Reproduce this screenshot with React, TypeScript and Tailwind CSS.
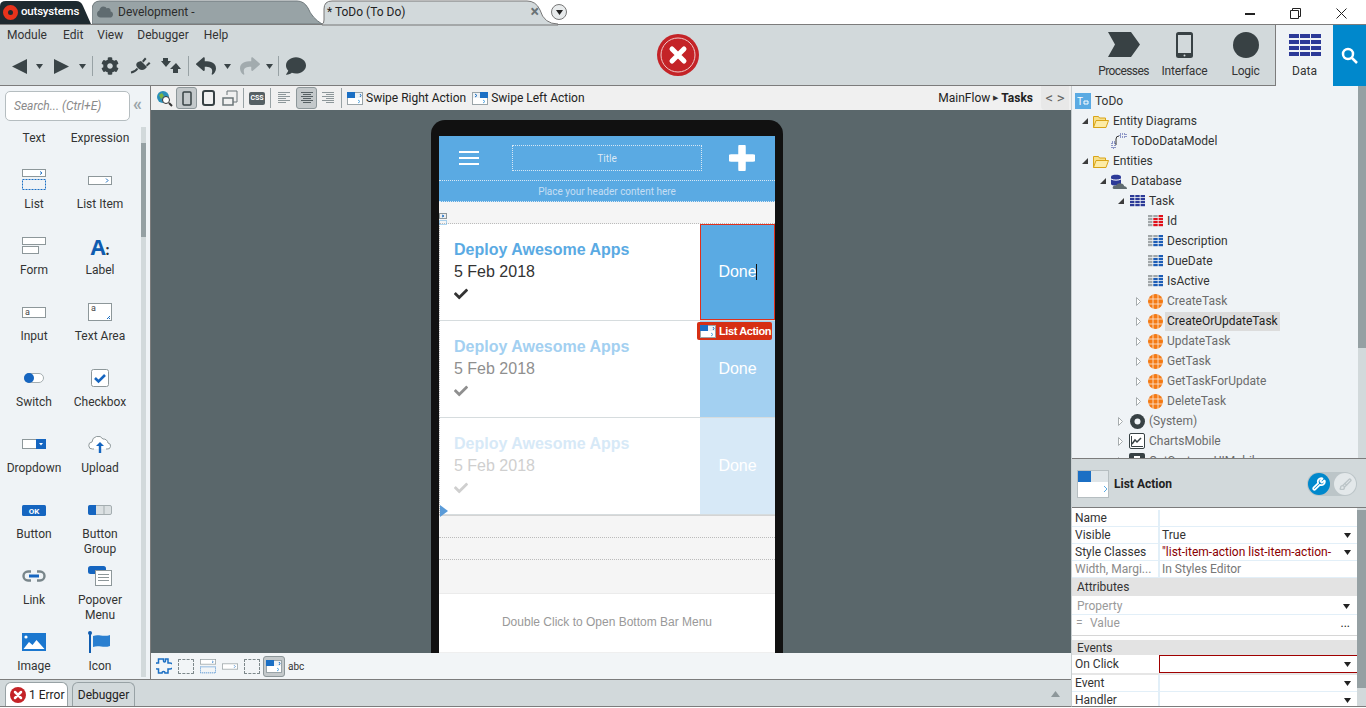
import * as React from "react";
import { Brush, Wrench } from "lucide-react";
import { FaCheck, FaCloud, FaCog, FaComment, FaReply, FaShare } from "react-icons/fa";

const Caret = ({ className = "" }: { className?: string }) => (
  <svg width="7" height="5" viewBox="0 0 7 5" className={className}>
    <path d="M0 0h7L3.5 5z" fill="currentColor" />
  </svg>
);

const Sep = ({ className = "" }: { className?: string }) => (
  <div className={`h-[20px] w-px bg-[#98a2a5] ${className}`} />
);

function SwipeIcon({ flip = false }: { flip?: boolean }) {
  return (
    <svg width="16" height="13" viewBox="0 0 16 13" className="shrink-0">
      <rect x="0.5" y="0.5" width="15" height="12" fill="#fff" stroke="#9aa4a8" />
      <rect x="1" y="1" width="14" height="5" fill="#eef2f5" />
      <rect x={flip ? 8 : 0} y="0" width="8" height="6" fill="#1b6fc4" />
      <path d={flip ? "M3 2l2 1.5L3 5" : "M13 2l1 1.5L13 5"} stroke="#1b6fc4" fill="none" />
      <path d="M11 8l2 1.5L11 11" stroke="#5aaae3" fill="none" />
    </svg>
  );
}

const ListBox = () => (
  <svg width="24" height="22" viewBox="0 0 24 22">
    <rect x="0.5" y="0.5" width="23" height="7" fill="#fff" stroke="#8d979a" />
    <path d="M18 2.5l2 1.5-2 1.5" stroke="#1b6fc4" fill="none" />
    <rect x="0.5" y="10.5" width="23" height="10" fill="none" stroke="#1b6fc4" strokeDasharray="2 1" />
  </svg>
);

const ItemBox = () => (
  <svg width="24" height="9" viewBox="0 0 24 9">
    <rect x="0.5" y="0.5" width="23" height="8" fill="#fff" stroke="#8d979a" />
    <path d="M18 2.5l2 2-2 2" stroke="#1b6fc4" fill="none" />
  </svg>
);

const widgets: { label: string; icon: React.ReactNode; two?: string }[] = [
  { label: "List", icon: <ListBox /> },
  { label: "List Item", icon: <ItemBox /> },
  {
    label: "Form",
    icon: (
      <svg width="24" height="18" viewBox="0 0 24 18" fill="#fff" stroke="#8d979a">
        <rect x="0.5" y="0.5" width="23" height="7" />
        <rect x="0.5" y="9.5" width="16" height="7" />
      </svg>
    ),
  },
  {
    label: "Label",
    icon: <span className="font-['Open_Sans',sans-serif] text-[22px] font-bold leading-none text-[#0f5cb0]">A<span className="text-[14px] text-[#333]">:</span></span>,
  },
  {
    label: "Input",
    icon: (
      <svg width="24" height="11" viewBox="0 0 24 11">
        <rect x="0.5" y="0.5" width="23" height="10" fill="#fff" stroke="#8d979a" />
        <text x="3" y="8" fontSize="9" fill="#444">a</text>
      </svg>
    ),
  },
  {
    label: "Text Area",
    icon: (
      <svg width="24" height="18" viewBox="0 0 24 18">
        <rect x="0.5" y="0.5" width="23" height="17" fill="#fff" stroke="#8d979a" />
        <text x="3" y="8" fontSize="9" fill="#444">a</text>
        <path d="M19 16l3-3M21 16l1-1" stroke="#1b6fc4" />
      </svg>
    ),
  },
  {
    label: "Switch",
    icon: (
      <svg width="20" height="10" viewBox="0 0 20 10">
        <rect x="0.5" y="0.5" width="19" height="9" rx="4.5" fill="#fff" stroke="#a4adb0" />
        <circle cx="5" cy="5" r="5" fill="#1565c0" />
      </svg>
    ),
  },
  {
    label: "Checkbox",
    icon: (
      <svg width="18" height="18" viewBox="0 0 18 18">
        <rect x="0.5" y="0.5" width="17" height="17" rx="2" fill="#fff" stroke="#8d979a" />
        <path d="M4 9l3.5 3.5L14 6" stroke="#1565c0" strokeWidth="2.6" fill="none" />
      </svg>
    ),
  },
  {
    label: "Dropdown",
    icon: (
      <svg width="24" height="10" viewBox="0 0 24 10">
        <rect x="0.5" y="0.5" width="23" height="9" fill="#fff" stroke="#8d979a" />
        <rect x="14" y="0" width="10" height="10" fill="#1565c0" />
        <path d="M17 4h4l-2 2.5z" fill="#fff" />
      </svg>
    ),
  },
  {
    label: "Upload",
    icon: (
      <svg width="24" height="18" viewBox="0 0 24 18">
        <path d="M6 14H4.5a3.5 3.5 0 0 1-.5-7 6 6 0 0 1 11-3 4.5 4.5 0 0 1 5 4 3 3 0 0 1-1 6h-1" fill="#fff" stroke="#8d979a" />
        <path d="M12 7l-4 4h2.8v7h2.4v-7H16z" fill="#1565c0" />
      </svg>
    ),
  },
  {
    label: "Button",
    icon: (
      <svg width="24" height="11" viewBox="0 0 24 11">
        <rect width="24" height="11" rx="1.5" fill="#1565c0" />
        <text x="12" y="8.5" fontSize="8" fontWeight="700" textAnchor="middle" fill="#fff">OK</text>
      </svg>
    ),
  },
  {
    label: "Button",
    two: "Group",
    icon: (
      <svg width="24" height="10" viewBox="0 0 24 10">
        <rect x="0.5" y="0.5" width="23" height="9" rx="1.5" fill="#dbe0e2" stroke="#a4adb0" />
        <path d="M8 0H2a2 2 0 0 0-2 2v6a2 2 0 0 0 2 2h6z" fill="#1565c0" />
        <path d="M16 0v10" stroke="#a4adb0" />
      </svg>
    ),
  },
  {
    label: "Link",
    icon: (
      <svg width="24" height="12" viewBox="0 0 24 12" fill="none" strokeWidth="2.4">
        <path d="M9 1.5H6a4.5 4.5 0 0 0 0 9h3M15 1.5h3a4.5 4.5 0 0 1 0 9h-3" stroke="#78858a" />
        <path d="M7 6h10" stroke="#1565c0" strokeWidth="3" />
      </svg>
    ),
  },
  {
    label: "Popover",
    two: "Menu",
    icon: (
      <svg width="24" height="20" viewBox="0 0 24 20">
        <rect x="0" y="0" width="18" height="8" rx="2.5" fill="#1565c0" />
        <rect x="7.5" y="4.5" width="16" height="15" fill="#fff" stroke="#8d979a" />
        <path d="M10 8.5h11M10 11.5h11M10 14.5h11" stroke="#8d979a" />
      </svg>
    ),
  },
  {
    label: "Image",
    icon: (
      <svg width="24" height="18" viewBox="0 0 24 18">
        <rect width="24" height="18" fill="#1b77cf" />
        <circle cx="4" cy="4" r="1.6" fill="#fff" />
        <path d="M1.5 16l5.5-7 3.5 3 4-5 8 9z" fill="#fff" />
      </svg>
    ),
  },
  {
    label: "Icon",
    icon: (
      <svg width="24" height="22" viewBox="0 0 24 22">
        <circle cx="2" cy="2" r="2" fill="#0f5cb0" />
        <path d="M1 2h2v20H1z" fill="#0f5cb0" />
        <path d="M5 5c6-2.500 9 1.500 17-1v11c-7 2.500-11-1.500-17 1z" fill="#2a7fd0" />
      </svg>
    ),
  },
];

function TaskGrid({ cell = "#2c3a98" }: { cell?: string }) {
  return (
    <svg width="15" height="12" viewBox="0 0 15 12" fill={cell}>
      {[0, 3, 6, 9].map((y) => [0, 5.3, 10.6].map((x) => <rect key={`${x}-${y}`} x={x} y={y} width="4.4" height="2.2" />))}
    </svg>
  );
}

function AttrIcon({ pk = false }: { pk?: boolean }) {
  const tone = pk ? "#e0101a" : "#1c5cb5";
  return (
    <svg width="15" height="12" viewBox="0 0 15 12">
      {[0, 3, 6, 9].map((y) => (
        <React.Fragment key={y}>
          <rect x="0" y={y} width="4.4" height="2.2" fill="#a0a6a8" />
          <rect x="5.3" y={y} width="4.4" height="2.2" fill={y === 0 ? "#a0a6a8" : tone} />
          <rect x="10.6" y={y} width="4.4" height="2.2" fill={tone} />
        </React.Fragment>
      ))}
    </svg>
  );
}

const ActionIcon = () => (
  <svg width="15" height="15" viewBox="0 0 15 15">
    <circle cx="7.5" cy="7.5" r="7.5" fill="#f47a14" />
    <path d="M0 5h15M0 10h15M5 0v15M10 0v15" stroke="#fff" strokeWidth="0.8" opacity="0.85" />
  </svg>
);

const FolderIcon = () => (
  <svg width="16" height="13" viewBox="0 0 16 13">
    <path d="M.5 12.500V1.500h5l1 1.500h6v2" fill="#f7e08a" stroke="#d9a418" />
    <path d="M.5 12.500l2.500-7h12.500l-2.500 7z" fill="#fdeca6" stroke="#d9a418" />
  </svg>
);

type TreeRow = {
  label: string;
  pad: string;
  arrow?: "open" | "closed";
  icon: React.ReactNode;
  tone?: string;
  selected?: boolean;
};

const treeRows: TreeRow[] = [
  {
    label: "ToDo",
    pad: "pl-[3px]",
    icon: (
      <svg width="16" height="16" viewBox="0 0 16 16">
        <rect width="16" height="16" fill="#5aaae3" />
        <text x="2" y="12" fontSize="10" fill="#fff">T</text>
        <path d="M9 8h4v3H9z" stroke="#fff" fill="none" />
      </svg>
    ),
  },
  { label: "Entity Diagrams", pad: "pl-[10px]", arrow: "open", icon: <FolderIcon /> },
  {
    label: "ToDoDataModel",
    pad: "pl-[39px]",
    icon: (
      <svg width="16" height="16" viewBox="0 0 16 16" fill="none">
        <path d="M1 9h3v6H1zM9 1h6v3H9z" stroke="#2c3a98" strokeDasharray="1 1" />
        <path d="M5 12V6q0-3 3-3" stroke="#333" />
      </svg>
    ),
  },
  { label: "Entities", pad: "pl-[10px]", arrow: "open", icon: <FolderIcon /> },
  {
    label: "Database",
    pad: "pl-[28px]",
    arrow: "open",
    icon: (
      <svg width="16" height="15" viewBox="0 0 16 15">
        <path d="M0 2.500C0 0 10 0 10 2.500V10C10 12 0 12 0 10z" fill="#2c3a98" />
        <path d="M0 5c2 1.500 8 1.500 10 0" stroke="#fff" fill="none" />
        <path d="M3 15q-2-.5-1-2.500 1-1.500 3-1 2-3 5-2 3 .5 3 2.500 3 .5 3 3z" fill="#5f6b70" />
      </svg>
    ),
  },
  { label: "Task", pad: "pl-[46px]", arrow: "open", icon: <TaskGrid /> },
  { label: "Id", pad: "pl-[75px]", icon: <AttrIcon pk /> },
  { label: "Description", pad: "pl-[75px]", icon: <AttrIcon /> },
  { label: "DueDate", pad: "pl-[75px]", icon: <AttrIcon /> },
  { label: "IsActive", pad: "pl-[75px]", icon: <AttrIcon /> },
  { label: "CreateTask", pad: "pl-[64px]", arrow: "closed", icon: <ActionIcon />, tone: "text-[#6b6b6b]" },
  { label: "CreateOrUpdateTask", pad: "pl-[64px]", arrow: "closed", icon: <ActionIcon />, selected: true },
  { label: "UpdateTask", pad: "pl-[64px]", arrow: "closed", icon: <ActionIcon />, tone: "text-[#6b6b6b]" },
  { label: "GetTask", pad: "pl-[64px]", arrow: "closed", icon: <ActionIcon />, tone: "text-[#6b6b6b]" },
  { label: "GetTaskForUpdate", pad: "pl-[64px]", arrow: "closed", icon: <ActionIcon />, tone: "text-[#6b6b6b]" },
  { label: "DeleteTask", pad: "pl-[64px]", arrow: "closed", icon: <ActionIcon />, tone: "text-[#6b6b6b]" },
  {
    label: "(System)",
    pad: "pl-[46px]",
    arrow: "closed",
    tone: "text-[#6b6b6b]",
    icon: (
      <svg width="15" height="15" viewBox="0 0 15 15">
        <circle cx="7.500" cy="7.500" r="7.500" fill="#374144" />
        <circle cx="7.500" cy="7.500" r="3" fill="#eff3f6" />
      </svg>
    ),
  },
  {
    label: "ChartsMobile",
    pad: "pl-[46px]",
    arrow: "closed",
    tone: "text-[#6b6b6b]",
    icon: (
      <svg width="16" height="16" viewBox="0 0 16 16" fill="none">
        <rect x="0.500" y="0.500" width="15" height="15" rx="1.500" fill="#fff" stroke="#374144" />
        <path d="M3 11l3-4 2 2 4-4" stroke="#374144" strokeWidth="1.500" />
        <path d="M2.500 3v10.500H14" stroke="#374144" />
      </svg>
    ),
  },
  {
    label: "OutSystemsUIMobile",
    pad: "pl-[46px]",
    arrow: "closed",
    tone: "text-[#6b6b6b]",
    icon: (
      <svg width="16" height="16" viewBox="0 0 16 16">
        <rect width="16" height="16" rx="2" fill="#374144" />
        <rect x="5" y="3" width="6" height="8" fill="#fff" />
      </svg>
    ),
  },
];

function TreeArrow({ kind }: { kind: "open" | "closed" }) {
  return (
    <span className="flex w-[11px] shrink-0 items-center">
      {kind === "open" ? (
        <svg width="6" height="6" viewBox="0 0 6 6"><path d="M6 0v6H0z" fill="#3c3c3c" /></svg>
      ) : (
        <svg width="5" height="9" viewBox="0 0 5 9"><path d="M.5.5l4 4-4 4z" fill="#fff" stroke="#a7adaf" /></svg>
      )}
    </span>
  );
}

function PropRow({ label, value, dim, arrow, valueClass = "" }: { label: string; value?: string; dim?: boolean; arrow?: boolean; valueClass?: string }) {
  return (
    <div className="flex h-[17px] items-center border-b border-[#e2eff8] leading-[16px]">
      <div className={`h-full w-[88px] shrink-0 truncate border-r-2 border-[#e2eff8] pl-[3px] ${dim ? "text-[#8a8a8a]" : "text-[#333]"}`}>{label}</div>
      <div className={`min-w-0 flex-1 truncate pl-[2px] ${valueClass}`}>{value}</div>
      {arrow && <Caret className="mr-[6px] shrink-0 text-[#222]" />}
    </div>
  );
}

function ListRow({ tone, first }: { tone: { title: string; date: string; check: string; done: string }; first?: boolean }) {
  return (
    <div className="border-l border-dotted border-[#bbb] font-['Liberation_Sans',sans-serif]">
      <div className="flex h-[97px] border-b border-[#d6dcde] bg-white">
        <div className="w-[260px] pl-[14px] pt-[16px]">
          <div className={`text-[16px] leading-[20px] font-bold ${tone.title}`}>Deploy Awesome Apps</div>
          <div className={`mt-[2px] text-[16px] leading-[20px] ${tone.date}`}>5 Feb 2018</div>
          <FaCheck className={`mt-[5px] text-[14px] ${tone.check}`} />
        </div>
        <div className={`flex w-[75px] items-center justify-center text-[16px] text-white ${tone.done} ${first ? "border border-[#e0301c]" : ""}`}>
          Done
          {first && <span className="-ml-px h-[16px] w-px bg-[#111]" />}
        </div>
      </div>
    </div>
  );
}

function AlignIcon({ kind }: { kind: "l" | "c" | "r" }) {
  const lines = [12, 8, 12, 8, 12, 8];
  return (
    <svg width="12" height="12" viewBox="0 0 12 12">
      {lines.map((w, i) => {
        const x = kind === "l" ? 0 : kind === "r" ? 12 - w : (12 - w) / 2;
        return <path key={i} d={`M${x} ${i * 2 + 0.5}h${w}`} stroke={kind === "c" ? "#566064" : "#8d979a"} />;
      })}
    </svg>
  );
}

function NavItem({ label, icon, tight }: { label: string; icon: React.ReactNode; tight?: boolean }) {
  return (
    <div className="flex w-[61px] flex-col items-center">
      <div className="flex h-[27px] items-center">{icon}</div>
      <div className={`mt-[5px] leading-[16px] text-[#333] ${tight ? "tracking-[-0.6px]" : "tracking-[-0.2px]"}`}>{label}</div>
    </div>
  );
}

export default function App() {
  return (
    <div className="flex h-[708px] w-[1366px] flex-col overflow-hidden bg-white font-['Roboto',sans-serif] text-[12px] text-[#333]">
      {/* tab strip */}
      <div className="flex h-[25px] shrink-0 items-stretch border-b border-[#7c7c7c]">
        <div className="relative w-[92px]">
          <svg width="92" height="24" viewBox="0 0 92 24" className="absolute inset-0">
            <path d="M0 24V6Q0 1 6 1H76Q81 1 83 6L91 24z" fill="#1e2a30" />
          </svg>
          <div className="relative flex h-full items-center pl-[3px] text-[11.500px] font-medium tracking-[-0.2px] text-white">
            <svg width="15" height="15" viewBox="0 0 15 15" className="mr-[3px]">
              <circle cx="7.500" cy="7.500" r="5" fill="#1e2a30" stroke="#e8331c" strokeWidth="5" />
            </svg>
            outsystems
          </div>
        </div>
        <div className="relative w-[230px]">
          <svg width="230" height="24" viewBox="0 0 230 24" className="absolute inset-0">
            <path d="M0 24V10Q0 1 8 1H205Q212 1 216 8 220 18 230 24z" fill="#98a3a6" stroke="#6f797c" />
          </svg>
          <div className="relative flex h-full items-center pl-[5px] text-[12px] text-[#2b2b2b]">
            <FaCloud className="mr-[5px] text-[16px] text-[#5f6b70]" />
            Development -
          </div>
        </div>
        <div className="relative w-[229px]">
          <svg width="236" height="25" viewBox="0 0 236 25" className="absolute inset-0 overflow-visible">
            <path d="M0 24q2 0 2-4V9Q2 1 10 1H205Q214 1 218 10 222 24 236 24v1H0z" fill="#d2d9db" stroke="#777" />
          </svg>
          <div className="relative flex h-full items-center pl-[5px] text-[12px] text-[#222]">
            * ToDo (To Do)
            <span className="ml-[125px] text-[16px] font-bold leading-none text-[#6b7376]">×</span>
          </div>
        </div>
        <div className="relative flex items-center">
          <div className="flex h-[16px] w-[16px] items-center justify-center rounded-full border border-[#777] bg-[#e8ebec] text-[#222]">
            <Caret />
          </div>
        </div>
        <div className="flex-1" />
        <div className="flex w-[139px] items-center pl-[18px] pt-[3px]">
          <div className="h-[2px] w-[10px] bg-[#222]" />
          <svg width="11" height="11" viewBox="0 0 11 11" className="ml-[35px]" fill="none" stroke="#222">
            <path d="M.5 2.500h8v8h-8zM2.500 2.500v-2h8v8h-2" />
          </svg>
          <svg width="11" height="11" viewBox="0 0 11 11" className="ml-[35px]" stroke="#222">
            <path d="M.5.500l10 10M10.500.500l-10 10" />
          </svg>
        </div>
      </div>

      {/* ribbon */}
      <div className="flex h-[61px] shrink-0 border-b border-[#7c7c7c] bg-[#d2d9db]">
        <div className="w-[648px] pl-[7px]">
          <div className="flex h-[19px] items-center text-[#333]">
            <span className="mr-[16px]">Module</span>
            <span className="mr-[14px]">Edit</span>
            <span className="mr-[14px]">View</span>
            <span className="mr-[15px]">Debugger</span>
            <span>Help</span>
          </div>
          <div className="mt-[10px] flex h-[24px] items-center text-[#3a4447]">
            <svg width="15" height="15" viewBox="0 0 15 15" className="ml-[5px]"><path d="M15 0v15L0 7.500z" fill="currentColor" /></svg>
            <Caret className="ml-[9px]" />
            <svg width="15" height="15" viewBox="0 0 15 15" className="ml-[11px]"><path d="M0 0v15l15-7.500z" fill="currentColor" /></svg>
            <Caret className="ml-[10px]" />
            <Sep className="ml-[6px]" />
            <FaCog className="ml-[8px] text-[18px]" />
            <svg width="22" height="18" viewBox="0 0 22 18" className="ml-[10px]" fill="currentColor">
              <path d="M12 4l6 6-2 2q-3 2-6 0L8 10Q6 7 9 5z" />
              <path d="M13 4l3-3.500 1.500 1.500L14.500 5.500zM17 8l3-3 1.500 1.500L18 9.500z" />
              <path d="M8.500 11.500Q6 15 2 15.500" fill="none" stroke="currentColor" strokeWidth="2" />
            </svg>
            <svg width="20" height="16" viewBox="0 0 20 16" className="ml-[10px]">
              <path d="M2 0h5v3h3L5 9 0 3h2zM15 5l5 6h-3v4h-5v-4H9z" fill="currentColor" />
            </svg>
            <Sep className="ml-[7px]" />
            <FaReply className="ml-[7px] text-[20px]" />
            <Caret className="ml-[8px]" />
            <FaShare className="ml-[9px] text-[20px] text-[#a2abae]" />
            <Caret className="ml-[6px]" />
            <Sep className="ml-[5px]" />
            <FaComment className="ml-[7px] text-[20px]" />
          </div>
        </div>
        <div className="flex w-[60px] items-center justify-center">
          <svg width="42" height="42" viewBox="0 0 42 42">
            <circle cx="21" cy="21" r="21" fill="#c42327" />
            <circle cx="21" cy="21" r="17" fill="#c42327" stroke="#f0c9c9" />
            <path d="M15 15l12 12M27 15L15 27" stroke="#fff" strokeWidth="5" strokeLinecap="round" />
          </svg>
        </div>
        <div className="flex flex-1 justify-end">
          <div className="-mr-[2px] flex pt-[6px]">
            <NavItem
              tight
              label="Processes"
              icon={<svg width="32" height="25" viewBox="0 0 32 25"><path d="M0 0h23l9 12.500-9 12.500H0l7-12.500z" fill="#384144" /></svg>}
            />
            <NavItem
              label="Interface"
              icon={
                <svg width="17" height="26" viewBox="0 0 17 26">
                  <rect width="17" height="26" rx="2.500" fill="#384144" />
                  <rect x="2" y="3" width="13" height="18" fill="#d2d9db" />
                  <circle cx="8.500" cy="23.500" r="1" fill="#d2d9db" />
                </svg>
              }
            />
            <NavItem label="Logic" icon={<div className="h-[26px] w-[26px] rounded-full bg-[#384144]" />} />
          </div>
          <div className="relative mb-[-1px] ml-[1px] flex w-[58px] flex-col items-center border-l border-[#7c7c7c] bg-[#eff3f6] pt-[9px]">
            <svg width="32" height="22" viewBox="0 0 32 22" fill="#2c3a98">
              {[0, 6, 12, 18].map((y) => [0, 11, 22].map((x) => <rect key={`${x}-${y}`} x={x} y={y} width="10" height="4" />))}
            </svg>
            <div className="mt-[7px] leading-[16px] text-[#333]">Data</div>
          </div>
          <div className="relative mb-[-1px] flex w-[33px] items-center justify-center bg-[#0088cc]">
            <svg width="17" height="17" viewBox="0 0 17 17" fill="none" stroke="#fff" strokeWidth="2.500">
              <circle cx="7" cy="7" r="5" />
              <path d="M11 11l5 5" />
            </svg>
          </div>
        </div>
      </div>

      {/* main */}
      <div className="flex min-h-0 flex-1">
        <div className="flex h-full w-[1071px] shrink-0 flex-col">
          <div className="flex min-h-0 flex-1">
            {/* widget toolbox */}
            <div className="flex h-full w-[151px] shrink-0 flex-col border-r border-[#7c7c7c] bg-[#eff3f6]">
              <div className="flex h-[41px] shrink-0 items-start pl-[5px] pt-[5px]">
                <div className="flex h-[30px] w-[125px] items-center rounded-[5px] border border-[#b5bdc0] bg-white pl-[8px] italic text-[#8a8a8a]">Search... (Ctrl+E)</div>
                <span className="ml-[3px] mt-[4px] text-[18px] font-bold leading-[18px] text-[#9aa4a8]">«</span>
              </div>
              <div className="flex min-h-0 flex-1">
                <div className="w-[141px] overflow-hidden">
                  <div className="grid h-[41px] grid-cols-[66px_66px] pl-px pt-[3px] text-center leading-[16px]">
                    <span>Text</span>
                    <span>Expression</span>
                  </div>
                  <div className="grid grid-cols-[66px_66px] pl-px">
                    {widgets.map((w) => (
                      <div key={`${w.label}${w.two ?? ""}`} className="h-[66px] text-center leading-[15px]">
                        <div className="flex h-[24px] items-center justify-center">{w.icon}</div>
                        <div className="mt-[5px]">{w.label}</div>
                        {w.two && <div>{w.two}</div>}
                      </div>
                    ))}
                  </div>
                </div>
                <div className="mb-[2px] w-[5px] bg-[#d2d9db] pt-[16px]">
                  <div className="h-[94px] bg-[#95a0a3]" />
                </div>
              </div>
            </div>

            {/* editor column */}
            <div className="flex h-full w-[920px] shrink-0 flex-col">
              <div className="flex h-[24px] shrink-0 items-center bg-[#f0f0f0] pl-[5px] text-[#222]">
                <svg width="17" height="17" viewBox="0 0 17 17">
                  <circle cx="7" cy="7" r="6" fill="#2a8fb8" />
                  <path d="M3 5l3-2 2 3-3 3zM8 9l3 0-1 3z" fill="#7cb342" />
                  <circle cx="10" cy="10" r="3.500" fill="#fff" stroke="#333" />
                  <path d="M13 13l3 3" stroke="#333" strokeWidth="2" />
                </svg>
                <div className="ml-[3px] flex h-[22px] w-[21px] items-center justify-center rounded-[3px] border border-[#8d979a] bg-[#c4c9cb]">
                  <svg width="10" height="15" viewBox="0 0 10 15" fill="none"><rect x="1" y="1" width="8" height="13" rx="1" stroke="#374144" strokeWidth="1.500" /></svg>
                </div>
                <svg width="15" height="16" viewBox="0 0 15 16" fill="none" className="ml-[4px]"><rect x="2" y="1" width="11" height="14" rx="2" stroke="#374144" strokeWidth="2" /></svg>
                <svg width="16" height="16" viewBox="0 0 16 16" fill="none" stroke="#6b7578" className="ml-[6px]"><path d="M5 5V1h10v11h-4" /><rect x="1" y="8" width="10" height="7" strokeWidth="1.500" /></svg>
                <Sep className="ml-[5px]" />
                <div className="ml-[5px] flex h-[13px] w-[16px] items-center justify-center rounded-[2px] bg-[#566064] text-[7px] font-bold leading-none text-white">CSS</div>
                <Sep className="ml-[5px]" />
                <div className="ml-[7px]"><AlignIcon kind="l" /></div>
                <div className="ml-[6px] flex h-[22px] w-[21px] items-center justify-center rounded-[3px] border border-[#8d979a] bg-[#c4c9cb]"><AlignIcon kind="c" /></div>
                <div className="ml-[5px]"><AlignIcon kind="r" /></div>
                <Sep className="ml-[7px]" />
                <div className="ml-[5px]"><SwipeIcon /></div>
                <span className="ml-[3px]">Swipe Right Action</span>
                <div className="ml-[6px]"><SwipeIcon flip /></div>
                <span className="ml-[3px]">Swipe Left Action</span>
                <div className="flex-1" />
                <span>MainFlow</span>
                <span className="mx-[3px] text-[7px] text-[#333]">▶</span>
                <span className="font-bold">Tasks</span>
                <div className="ml-[8px] mr-[2px] flex h-[24px] w-[28px] items-center justify-center rounded-bl-[4px] bg-[#e8e8e8] text-[15px] text-[#666]">&lt; &gt;</div>
              </div>

              <div className="relative min-h-0 flex-1 overflow-hidden bg-[#5a676b] pl-[280px] pt-[10px]">
                <div className="h-[600px] w-[352px] rounded-t-[14px] bg-[#111] px-[8px] pt-[16px]">
                  <div className="relative w-[336px] bg-[#f5f5f5]">
                    <div className="flex h-[44px] items-center bg-[#5aaae3] pl-[20px]">
                      <div className="flex h-[14px] w-[20px] flex-col justify-between">
                        <div className="h-[2px] bg-white" />
                        <div className="h-[2px] bg-white" />
                        <div className="h-[2px] bg-white" />
                      </div>
                      <div className="ml-[33px] flex h-[26px] w-[190px] items-center justify-center border border-dotted border-[#d8e8f5] text-[10px] text-[#dbe9f5]">Title</div>
                      <svg width="26" height="26" viewBox="0 0 26 26" className="ml-[27px]">
                        <path d="M13 2v22M2 13h22" stroke="#fff" strokeWidth="7.500" strokeLinecap="round" />
                      </svg>
                    </div>
                    <div className="flex h-[22px] items-center justify-center border-y border-dotted border-[#d8e8f5] bg-[#5aaae3] text-[10px] text-[#c5def3]">Place your header content here</div>
                    <div className="h-[22px] border-b border-dotted border-[#bbb]" />
                    <ListRow first tone={{ title: "text-[#5aaae3]", date: "text-[#333]", check: "text-[#333]", done: "bg-[#5aaae3]" }} />
                    <ListRow tone={{ title: "text-[#a3d0f1]", date: "text-[#8f8f8f]", check: "text-[#8f8f8f]", done: "bg-[#a3d0f1]" }} />
                    <ListRow tone={{ title: "text-[#d7e9f7]", date: "text-[#cfcfcf]", check: "text-[#cfcfcf]", done: "bg-[#d7e9f7]" }} />
                    <div className="h-px bg-[#d4d4d4]" />
                    <div className="h-[22px] border-b border-dotted border-[#bbb]" />
                    <div className="h-[22px] border-b border-dotted border-[#bbb]" />
                    <div className="h-[34px] border-b border-[#ebebeb]" />
                    <div className="flex h-[58px] items-center justify-center bg-white pb-[2px] font-['Liberation_Sans',sans-serif] text-[#999]">Double Click to Open Bottom Bar Menu</div>
                    <div className="h-[10px] bg-[#efefef]" />

                    <div className="absolute left-0 top-[77px]">
                      <svg width="9" height="12" viewBox="0 0 9 12" fill="none">
                        <rect x="0.500" y="0.500" width="7" height="5" fill="#eee" stroke="#8d979a" />
                        <path d="M3 2l2 1-2 1" stroke="#1b6fc4" />
                        <rect x="0.500" y="7.500" width="7" height="4" stroke="#5aaae3" strokeDasharray="1 1" />
                      </svg>
                    </div>
                    <div className="absolute left-[258px] top-[186px] flex h-[18px] w-[75px] items-center rounded-[2px] bg-[#d62f14] pl-[3px] font-['Liberation_Sans',sans-serif] text-white">
                      <SwipeIcon />
                      <span className="ml-[3px] whitespace-nowrap text-[11px] font-bold tracking-[-0.4px]">List Action</span>
                    </div>
                    <svg width="8" height="12" viewBox="0 0 8 12" className="absolute left-px top-[369px]"><path d="M0 0l8 6-8 6z" fill="#5a9bd8" /></svg>
                  </div>
                </div>
              </div>

              <div className="flex h-[26px] shrink-0 items-center bg-[#f2f5f7] pl-[5px] text-[10px]">
                <svg width="16" height="16" viewBox="0 0 16 16" fill="none" stroke="#1b6fc4" strokeWidth="1.500">
                  <path d="M5 1h2.500v2a1 1 0 0 0 2 0V1H12v4h2a1.500 1.500 0 0 1 0 6h-2v4H9a1.500 1.500 0 0 0-3 0H2.500v-4H1a2.500 2.500 0 0 1 0-6h1.500V1z" />
                </svg>
                <div className="ml-[6px] h-[15px] w-[16px] rounded-[1px] border border-dashed border-[#7d888b]" />
                <div className="ml-[6px] flex w-[16px] items-center"><svg width="16" height="15" viewBox="0 0 24 22"><rect x="0.500" y="0.500" width="23" height="7" fill="#fff" stroke="#8d979a" /><path d="M18 2.500l2 1.500-2 1.500" stroke="#1b6fc4" fill="none" /><rect x="0.500" y="11.500" width="23" height="9" fill="none" stroke="#1b6fc4" strokeDasharray="2 1" /></svg></div>
                <div className="ml-[6px] flex w-[16px] items-center"><svg width="16" height="7" viewBox="0 0 24 9"><rect x="0.500" y="0.500" width="23" height="8" fill="#fff" stroke="#8d979a" /><path d="M18 2.500l2 2-2 2" stroke="#1b6fc4" fill="none" /></svg></div>
                <div className="ml-[6px] h-[15px] w-[16px] rounded-[1px] border border-dashed border-[#7d888b]" />
                <div className="ml-[3px] flex h-[21px] w-[22px] items-center justify-center rounded-[3px] border border-[#8d979a] bg-[#c4c9cb]"><SwipeIcon /></div>
                <span className="ml-[3px] text-[#333]">abc</span>
              </div>
            </div>
          </div>

          {/* status bar */}
          <div className="mb-px flex h-[28px] shrink-0 items-end border-y border-[#7c7c7c] bg-[#d2d9db] pl-[5px]">
            <div className="flex h-[24px] w-[63px] items-center rounded-t-[6px] border border-b-0 border-[#98a2a5] bg-white pl-[4px] text-[#222]">
              <svg width="16" height="16" viewBox="0 0 16 16">
                <circle cx="8" cy="8" r="8" fill="#c42327" />
                <path d="M5 5l6 6M11 5l-6 6" stroke="#fff" strokeWidth="2.500" strokeLinecap="round" />
              </svg>
              <span className="ml-[3px]">1 Error</span>
            </div>
            <div className="ml-[4px] flex h-[24px] w-[63px] items-center justify-center rounded-t-[6px] border border-b-0 border-[#98a2a5] text-[#222]">Debugger</div>
            <div className="flex-1" />
            <svg width="9" height="6" viewBox="0 0 9 6" className="mb-[9px] mr-[11px]"><path d="M0 6l4.500-6L9 6z" fill="#8d979a" /></svg>
          </div>
        </div>

        {/* right column */}
        <div className="mb-px flex h-[621px] min-w-0 flex-1 flex-col border-b border-l border-b-[#7c7c7c] border-l-[#c8ced0] bg-[#eff3f6]">
          <div className="flex h-[372px] shrink-0">
            <div className="min-w-0 flex-1 overflow-hidden pt-[5px]">
              {treeRows.map((r) => (
                <div key={r.label} className={`flex h-[20px] items-center ${r.pad}`}>
                  {r.arrow && <TreeArrow kind={r.arrow} />}
                  <span className="flex w-[16px] shrink-0 items-center justify-center">{r.icon}</span>
                  <span className={`ml-[2px] flex h-[19px] items-center px-[2px] ${r.selected ? "bg-[#dcdcdc] text-[#222]" : r.tone ?? "text-[#333]"}`}>{r.label}</span>
                </div>
              ))}
            </div>
            <div className="w-[8px] bg-[#d2d9db]">
              <div className="h-[262px] bg-[#95a0a3]" />
            </div>
          </div>
          <div className="flex h-[50px] shrink-0 items-center border-y border-[#7c7c7c] bg-[#d2d9db] pl-[5px] pt-[2px]">
            <svg width="32" height="28" viewBox="0 0 32 28">
              <rect width="32" height="28" fill="#b6bec1" />
              <rect x="1" y="1" width="30" height="26" fill="#fff" />
              <rect x="1" y="1" width="13" height="11" fill="#1b6fc4" />
              <rect x="14" y="1" width="17" height="11" fill="#dfe5e8" />
              <path d="M27 16l3 3-3 3" stroke="#5aaae3" fill="none" />
            </svg>
            <span className="ml-[5px] font-bold text-[#222]">List Action</span>
            <div className="flex-1" />
            <div className="mr-[9px] flex h-[24px] w-[50px] items-center justify-between rounded-full bg-[#bcc5c8] px-[1px]">
              <div className="flex h-[22px] w-[22px] items-center justify-center rounded-full bg-[#0088cc]">
                <Wrench size={14} color="#fff" strokeWidth={3} />
              </div>
              <div className="flex h-[22px] w-[22px] items-center justify-center rounded-full bg-[#e3e8ea]">
                <Brush size={13} color="#bcc5c8" strokeWidth={2.500} />
              </div>
            </div>
          </div>
          <div className="flex min-h-0 flex-1 bg-white">
            <div className="min-w-0 flex-1 overflow-hidden pt-[2px]">
              <PropRow label="Name" />
              <PropRow label="Visible" value="True" arrow />
              <PropRow label="Style Classes" value={'"list-item-action list-item-action-'} arrow valueClass="text-[#8b0000]" />
              <PropRow label="Width, Margi..." value="In Styles Editor" dim valueClass="text-[#777]" />
              <div className="flex h-[18px] items-center bg-[#e3e3e3] pl-[5px]">Attributes</div>
              <div className="mt-[2px] flex h-[17px] items-center border-b border-[#e2eff8] pl-[5px] text-[#9a9a9a]">
                <span className="flex-1">Property</span>
                <Caret className="mr-[7px] text-[#222]" />
              </div>
              <div className="-mt-px flex h-[17px] items-center pl-[4px] text-[#9a9a9a]">
                <span className="w-[14px]">=</span>
                <span className="flex-1">Value</span>
                <span className="mr-[7px] text-[#222]">...</span>
              </div>
              <div className="mt-[4px] h-px bg-[#d6d6d6]" />
              <div className="mt-[4px] flex h-[15px] items-center bg-[#e3e3e3] pl-[5px]">Events</div>
              <div className="flex h-[18px] items-center">
                <div className="w-[87px] pl-[3px]">On Click</div>
                <div className="flex h-full flex-1 items-center justify-end border border-r-0 border-[#a00000] pr-[6px]"><Caret className="text-[#222]" /></div>
              </div>
              <div className="border-t-2 border-[#e6e6e6]">
                <PropRow label="Event" arrow />
              </div>
              <PropRow label="Handler" arrow />
            </div>
            <div className="w-[9px] bg-[#d2d9db] pt-[2px]">
              <div className="h-[178px] bg-[#95a0a3]" />
            </div>
          </div>
        </div>
      </div>
    </div>
  );
}
